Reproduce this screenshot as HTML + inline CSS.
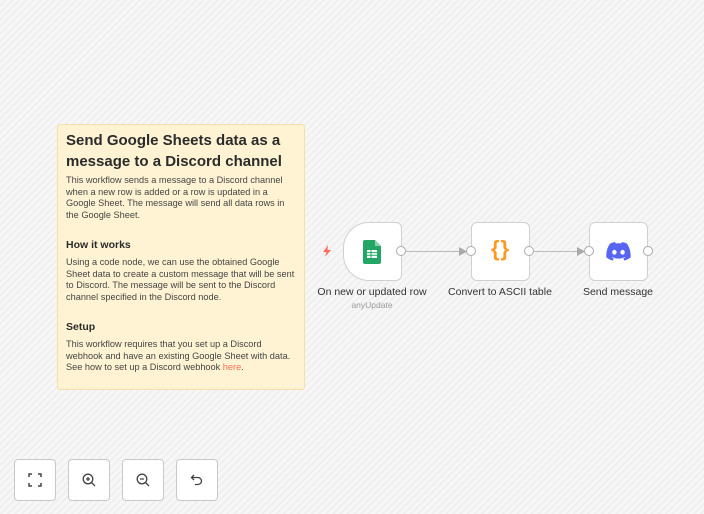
<!DOCTYPE html>
<html><head><style>
*{margin:0;padding:0;box-sizing:border-box}
body{width:704px;height:514px;overflow:hidden;font-family:"Liberation Sans",sans-serif;background:#f5f5f5;background-image:repeating-linear-gradient(135deg,#f7f7f7 0 3px,#efefef 3px 5px);position:relative}
.note{position:absolute;left:57px;top:124px;width:248px;height:266px;background:#fff3d3;border:1px solid #f3dfa8;border-radius:3px;padding:5px 8px;color:#444;font-size:9.2px;line-height:11.5px}
.note h1{font-size:15px;line-height:21px;color:#2b2b2b;font-weight:bold;margin-bottom:3px}
.note h2{font-size:10.5px;line-height:13px;color:#2b2b2b;font-weight:bold;margin:18px 0 5px}
.node{position:absolute;top:222px;width:59px;height:59px;background:#fff;border:1px solid #d0d0d0;border-radius:6px}
.dot{position:absolute;top:246px;width:10px;height:10px;border-radius:50%;background:#fff;border:1px solid #aaa}
.lbl{position:absolute;top:286px;font-size:10.5px;color:#333;text-align:center;width:140px}
.line{position:absolute;top:251px;height:1px;background:#bbb}
.btn{position:absolute;top:459px;width:42px;height:42px;background:#fff;border:1px solid #c8c8c8;border-radius:4px;display:flex;align-items:center;justify-content:center}
</style></head><body>
<div class="note">
<h1>Send Google Sheets data as a message to a Discord channel</h1>
<p>This workflow sends a message to a Discord channel when a new row is added or a row is updated in a Google Sheet. The message will send all data rows in the Google Sheet.</p>
<h2>How it works</h2>
<p>Using a code node, we can use the obtained Google Sheet data to create a custom message that will be sent to Discord. The message will be sent to the Discord channel specified in the Discord node.</p>
<h2>Setup</h2>
<p>This workflow requires that you set up a Discord webhook and have an existing Google Sheet with data. See how to set up a Discord webhook <span style="color:#ff6d5a">here</span>.</p>
</div>
<svg style="position:absolute;left:322px;top:245px" width="10" height="12" viewBox="0 0 10 12"><path d="M6 0L1 7h3.5L3 12l6-7H5.5z" fill="#ff6d5a"/></svg>
<div class="node" style="left:343px;border-radius:26px 6px 6px 26px"></div>
<svg style="position:absolute;left:363px;top:240px" width="18" height="24" viewBox="0 0 18 24"><path d="M0 2a2 2 0 0 1 2-2h10l6 6v16a2 2 0 0 1-2 2H2a2 2 0 0 1-2-2z" fill="#23a566"/><path d="M12 0v6h6z" fill="#8ed1b1"/><rect x="4" y="10" width="10" height="8" fill="#fff"/><path d="M4 12.6h10M4 15.3h10M8 10v8" stroke="#23a566" stroke-width="1"/></svg>
<div class="dot" style="left:396px"></div>
<div class="line" style="left:406px;width:60px"></div>
<svg style="position:absolute;left:459px;top:247px" width="8" height="9"><path d="M0 0l8 4.5L0 9z" fill="#aaa"/></svg>
<div class="node" style="left:471px"></div>
<div style="position:absolute;left:471px;top:236px;width:59px;text-align:center;font-size:22px;font-weight:bold;color:#ff9922;letter-spacing:1px">{}</div>
<div class="dot" style="left:466px"></div>
<div class="dot" style="left:524px"></div>
<div class="line" style="left:534px;width:50px"></div>
<svg style="position:absolute;left:577px;top:247px" width="8" height="9"><path d="M0 0l8 4.5L0 9z" fill="#aaa"/></svg>
<div class="node" style="left:589px"></div>
<svg style="position:absolute;left:606px;top:242px" width="25" height="19" viewBox="0 0 25 19"><path d="M21 1.6A20 20 0 0 0 16 0l-.7 1.4a19 19 0 0 0-5.6 0L9 0a20 20 0 0 0-5 1.6C.8 6.3 0 11 .4 15.5A20 20 0 0 0 6.5 18.6l1.3-2.1-2-1 .5-.4a14 14 0 0 0 12.4 0l.5.4-2 1 1.3 2.1a20 20 0 0 0 6.1-3.1C25 10.3 23.7 5.6 21 1.6zM8.4 12.7c-1.2 0-2.2-1.1-2.2-2.4S7.2 7.9 8.4 7.9s2.2 1.1 2.2 2.4-1 2.4-2.2 2.4zm8.2 0c-1.2 0-2.2-1.1-2.2-2.4s1-2.4 2.2-2.4 2.2 1.1 2.2 2.4-1 2.4-2.2 2.4z" fill="#5865f2"/></svg>
<div class="dot" style="left:584px"></div>
<div class="dot" style="left:643px"></div>
<div class="lbl" style="left:302px">On new or updated row</div>
<div class="lbl" style="left:302px;top:300px;font-size:8.5px;color:#999">anyUpdate</div>
<div class="lbl" style="left:430px">Convert to ASCII table</div>
<div class="lbl" style="left:548px">Send message</div>
<div class="btn" style="left:14px"><svg width="14" height="14" viewBox="0 0 14 14" fill="none" stroke="#444" stroke-width="1.5"><path d="M1 4V1h3M10 1h3v3M13 10v3h-3M4 13H1v-3"/></svg></div>
<div class="btn" style="left:68px"><svg width="14" height="14" viewBox="0 0 14 14" fill="none" stroke="#444" stroke-width="1.3"><circle cx="6" cy="6" r="4.8"/><path d="M9.5 9.5L13 13M6 4v4M4 6h4"/></svg></div>
<div class="btn" style="left:122px"><svg width="14" height="14" viewBox="0 0 14 14" fill="none" stroke="#444" stroke-width="1.3"><circle cx="6" cy="6" r="4.8"/><path d="M9.5 9.5L13 13M4 6h4"/></svg></div>
<div class="btn" style="left:176px"><svg width="14" height="14" viewBox="0 0 14 14" fill="none" stroke="#444" stroke-width="1.3"><path d="M4 2L1.5 4.5 4 7M1.5 4.5H8a3.5 3.5 0 0 1 0 7H5"/></svg></div>
</body></html>
